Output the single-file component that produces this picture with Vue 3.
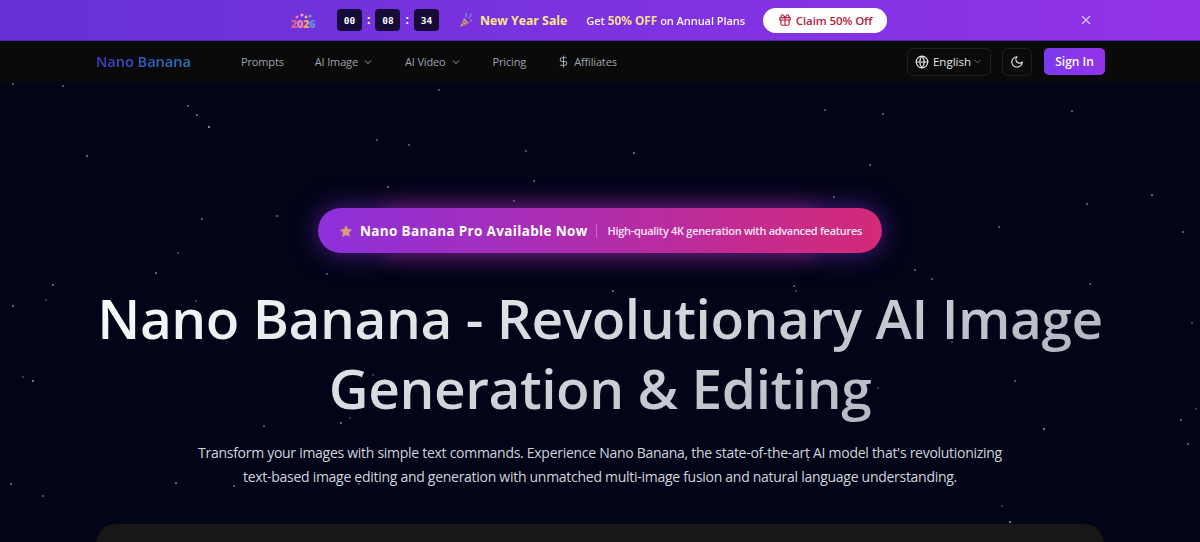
<template>
  <div class="page">
    <div class="promo">
      <div class="promo-inner">
        <div class="year">
          <svg width="24" height="10" viewBox="0 0 24 10">
            <circle cx="6" cy="6" r="1.6" fill="#e879a8" />
            <circle cx="11" cy="4" r="1.6" fill="#f0a0b8" />
            <circle cx="15" cy="6" r="1.4" fill="#f4b860" />
            <circle cx="19" cy="5" r="1.6" fill="#5aa0e8" />
          </svg>
          <span class="year-num"><i class="c1">2</i><i class="c2">0</i><i class="c3">2</i><i class="c4">6</i></span>
        </div>
        <div class="timer">
          <span class="digit">00</span><b>:</b><span class="digit">08</span><b>:</b><span class="digit">34</span>
        </div>
        <svg class="party" width="14" height="16" viewBox="0 0 14 16">
          <path d="M1 15 L5 6 L10 11 Z" fill="#d0a070" />
          <path d="M3 11 L7 14 M4 8.5 L9 12" stroke="#a85a90" stroke-width="1.2" />
          <path d="M7 5 Q8 2 6.5 1 M10 6 Q12 4 12 1.5" stroke="#6f8fe0" stroke-width="1.3" fill="none" />
          <circle cx="12" cy="8.5" r="1" fill="#d8709a" />
        </svg>
        <span class="sale">New Year Sale</span>
        <span class="offer">Get <strong>50% OFF</strong> on Annual Plans</span>
        <button class="claim">
          <svg width="14" height="14" viewBox="0 0 24 24" fill="none" stroke="currentColor" stroke-width="2" stroke-linecap="round" stroke-linejoin="round">
            <rect x="3" y="8" width="18" height="4" rx="1" />
            <path d="M12 8v13M19 12v7a2 2 0 0 1-2 2H7a2 2 0 0 1-2-2v-7" />
            <path d="M7.5 8a2.5 2.5 0 0 1 0-5C9.5 3 12 8 12 8s2.500-5 4.500-5a2.500 2.500 0 0 1 0 5" />
          </svg>
          Claim 50% Off
        </button>
      </div>
      <svg class="close" width="12" height="12" viewBox="0 0 12 12" fill="none" stroke="#d8c8f4" stroke-width="1.2">
        <path d="M2 2l8 8M10 2l-8 8" />
      </svg>
    </div>

    <nav class="nav">
      <div class="nav-inner">
        <span class="logo">Nano Banana</span>
        <div class="links">
          <a>Prompts</a>
          <a>AI Image
            <svg class="chev" width="12" height="12" viewBox="0 0 24 24" fill="none" stroke="currentColor" stroke-width="2"><path d="M6 9l6 6 6-6" /></svg>
          </a>
          <a>AI Video
            <svg class="chev" width="12" height="12" viewBox="0 0 24 24" fill="none" stroke="currentColor" stroke-width="2"><path d="M6 9l6 6 6-6" /></svg>
          </a>
          <a>Pricing</a>
          <a>
            <svg width="13" height="13" viewBox="0 0 24 24" fill="none" stroke="currentColor" stroke-width="2" stroke-linecap="round"><path d="M12 2v20M17 5H9.500a3.500 3.500 0 0 0 0 7h5a3.500 3.500 0 0 1 0 7H6" /></svg>
            Affiliates
          </a>
        </div>
        <div class="actions">
          <button class="lang">
            <svg width="14" height="14" viewBox="0 0 24 24" fill="none" stroke="currentColor" stroke-width="2"><circle cx="12" cy="12" r="10" /><path d="M2 12h20M12 2a15 15 0 0 1 0 20M12 2a15 15 0 0 0 0 20" /></svg>
            English
            <svg class="chev-dim" width="11" height="11" viewBox="0 0 24 24" fill="none" stroke="currentColor" stroke-width="2"><path d="M6 9l6 6 6-6" /></svg>
          </button>
          <button class="theme">
            <svg width="14" height="14" viewBox="0 0 24 24" fill="none" stroke="currentColor" stroke-width="2" stroke-linecap="round" stroke-linejoin="round"><path d="M12 3a6 6 0 0 0 9 9 9 9 0 1 1-9-9Z" /></svg>
          </button>
          <button class="signin">Sign In</button>
        </div>
      </div>
    </nav>

    <main class="hero">
      <i
        v-for="(s, i) in stars"
        :key="i"
        class="star"
        :style="{ left: s[0] + 'px', top: s[1] - 82 + 'px', opacity: s[2] }"
      ></i>
      <div class="badge">
        <svg width="14" height="14" viewBox="0 0 24 24" fill="#d69a78"><path d="M12 1.500l3.200 6.900 7.500.9-5.500 5.200 1.400 7.500L12 18.800l-6.600 3.700 1.400-7.500L1.300 9.300l7.500-.9z" /></svg>
        <span class="badge-title">Nano Banana Pro Available Now</span>
        <span class="badge-sep"></span>
        <span class="badge-sub">High-quality 4K generation with advanced features</span>
      </div>
      <h1 class="title">Nano Banana - Revolutionary AI Image Generation &amp; Editing</h1>
      <p class="lead">
        Transform your images with simple text commands. Experience Nano Banana, the state-of-the-art AI model that's revolutionizing<br />
        text-based image editing and generation with unmatched multi-image fusion and natural language understanding.
      </p>
      <div class="panel"></div>
    </main>
  </div>
</template>

<script setup>
// x, y, opacity of each star, read off the page
const stars = [
  [12, 83, 0.4], [62, 85, 0.45], [187, 105, 0.45], [196, 114, 0.5], [208, 126, 0.7], [376, 139, 0.4],
  [86, 155, 0.5], [387, 186, 0.45], [201, 218, 0.45], [276, 215, 0.45], [177, 252, 0.3], [155, 272, 0.5],
  [52, 284, 0.5], [45, 299, 0.3], [12, 305, 0.5], [195, 300, 0.3], [326, 273, 0.4], [438, 89, 0.4],
  [408, 144, 0.4], [525, 150, 0.4], [633, 152, 0.5], [533, 180, 0.45], [513, 200, 0.4], [612, 290, 0.5],
  [793, 285, 0.4], [795, 290, 0.3], [824, 109, 0.4], [882, 113, 0.45], [1071, 110, 0.45], [869, 164, 0.45],
  [1151, 194, 0.5], [1086, 203, 0.45], [833, 196, 0.45], [998, 226, 0.4], [1182, 231, 0.45], [914, 269, 0.45],
  [931, 278, 0.4], [1089, 283, 0.4], [22, 376, 0.3], [32, 380, 0.6], [372, 374, 0.3], [340, 422, 0.5],
  [349, 417, 0.25], [263, 425, 0.45], [10, 483, 0.5], [42, 495, 0.4], [175, 482, 0.5], [233, 485, 0.45],
  [358, 483, 0.4], [1191, 322, 0.3], [951, 341, 0.3], [1014, 380, 0.4], [877, 387, 0.3], [1195, 408, 0.25],
  [1180, 419, 0.45], [1043, 428, 0.6], [1187, 443, 0.45], [807, 459, 0.4], [889, 481, 0.4], [1001, 505, 0.3],
  [1009, 521, 0.6],
];
</script>

<style>
html,
body {
  background: #020417;
}
</style>

<style scoped>
.page {
  width: 1200px;
  height: 542px;
  overflow: hidden;
  font-family: "Open Sans", "Noto Sans", sans-serif;
  color: #fff;
}

.promo {
  position: relative;
  height: 40px;
  display: flex;
  align-items: center;
  justify-content: center;
  background: linear-gradient(90deg, #6531d6, #9333ea);
  border-bottom: 1px solid #4a2a96;
}

.promo-inner {
  display: flex;
  align-items: center;
  margin-right: 22px;
}

.year {
  width: 24px;
  display: flex;
  flex-direction: column;
  align-items: center;
  margin-right: 22px;
}

.year svg {
  margin-bottom: -3px;
}

.year-num {
  font-size: 11px;
  font-weight: 800;
  line-height: 11px;
  letter-spacing: -0.3px;
}

.year-num i {
  font-style: normal;
}

.c1 { color: #e8608a; }
.c2 { color: #e88aa8; }
.c3 { color: #eea860; }
.c4 { color: #5a90e0; }

.timer {
  display: flex;
  align-items: center;
  gap: 5px;
  margin-right: 20px;
}

.timer b {
  width: 3.5px;
  text-align: center;
  font-size: 12px;
  line-height: 20px;
  color: #fff;
}

.digit {
  width: 25px;
  height: 22px;
  display: flex;
  align-items: center;
  justify-content: center;
  border-radius: 4px;
  background: #170b38;
  font-family: "DejaVu Sans Mono", "Liberation Mono", monospace;
  font-size: 9.500px;
  font-weight: 700;
}

.party {
  margin-right: 7px;
}

.sale {
  font-size: 12.300px;
  font-weight: 700;
  color: #fde68a;
  margin-right: 19px;
  white-space: nowrap;
}

.offer {
  font-size: 11.100px;
  font-weight: 600;
  color: #fff;
  opacity: 0.95;
  margin-right: 18px;
  white-space: nowrap;
  letter-spacing: -0.1px;
}

.offer strong {
  font-size: 12px;
  font-weight: 700;
  color: #fde68a;
}

.claim {
  width: 124px;
  height: 25px;
  display: flex;
  align-items: center;
  justify-content: center;
  gap: 4px;
  border: 0;
  border-radius: 13px;
  background: #fff;
  color: #b91c3c;
  font-family: inherit;
  font-size: 11.500px;
  font-weight: 600;
  letter-spacing: -0.1px;
}

.close {
  position: absolute;
  right: 108px;
  top: 14px;
}

.nav {
  height: 41px;
  background: #0a0a0a;
}

.nav-inner {
  width: 1009px;
  height: 100%;
  margin-left: 96px;
  display: flex;
  align-items: center;
}

.logo {
  width: 145px;
  font-size: 14.500px;
  font-weight: 600;
  background: linear-gradient(90deg, #4338ca, #0ea5c0);
  -webkit-background-clip: text;
  background-clip: text;
  color: transparent;
  white-space: nowrap;
}

.links {
  display: flex;
  align-items: center;
  gap: 31px;
  font-size: 11px;
  letter-spacing: -0.15px;
  color: #9ca3af;
}

.links a {
  display: flex;
  align-items: center;
  gap: 4px;
  white-space: nowrap;
}

.actions {
  margin-left: auto;
  display: flex;
  align-items: center;
}

.lang,
.theme {
  height: 28px;
  display: flex;
  align-items: center;
  justify-content: center;
  border: 1px solid #1f1f1f;
  border-radius: 6px;
  background: #0a0a0a;
  color: #e5e7eb;
  font-family: inherit;
}

.lang {
  width: 84px;
  gap: 4px;
  padding: 0;
  font-size: 11.500px;
  margin-right: 11px;
}

.chev-dim {
  color: #777;
  margin-left: -3px;
}

.theme {
  width: 30px;
  padding: 0;
  margin-right: 12px;
}

.signin {
  width: 61px;
  height: 27px;
  border: 0;
  border-radius: 5px;
  background: linear-gradient(90deg, #7c3aed, #9333ea);
  color: #fff;
  font-family: inherit;
  font-size: 12px;
  font-weight: 600;
  padding: 0;
}

.hero {
  position: relative;
  isolation: isolate;
  height: 460px;
  background: #020417;
  display: flex;
  flex-direction: column;
  align-items: center;
  padding-top: 126px;
  box-sizing: border-box;
}

.star {
  position: absolute;
  width: 2px;
  height: 2px;
  border-radius: 50%;
  background: #fff;
}

.badge {
  position: relative;
  flex-shrink: 0;
  width: 564px;
  height: 45px;
  box-sizing: border-box;
  padding-left: 21px;
  display: flex;
  align-items: center;
  border-radius: 23px;
  background: linear-gradient(90deg, #8e30dc, #d42a78);
  box-shadow: 0 0 26px rgba(147, 51, 234, 0.55);
  white-space: nowrap;
}

.badge::before {
  content: "";
  position: absolute;
  left: 12%;
  right: 12%;
  top: -6px;
  bottom: -6px;
  z-index: -1;
  background: rgba(219, 39, 119, 0.26);
  filter: blur(10px);
}

.badge-title {
  margin-left: 7px;
  font-size: 13.500px;
  font-weight: 700;
  letter-spacing: 0.34px;
}

.badge-sep {
  width: 1px;
  height: 14px;
  margin: 0 11px 0 8px;
  background: rgba(255, 255, 255, 0.3);
}

.badge-sub {
  font-size: 11px;
  font-weight: 600;
  color: #f6e6f4;
  letter-spacing: -0.3px;
}

.title {
  position: relative;
  flex-shrink: 0;
  width: 1040px;
  margin: 30px 0 0;
  font-size: 55px;
  font-weight: 600;
  letter-spacing: -0.45px;
  line-height: 70px;
  text-align: center;
  background: linear-gradient(160deg, #fff, #a5a9b5);
  -webkit-background-clip: text;
  background-clip: text;
  color: transparent;
}

.lead {
  position: relative;
  flex-shrink: 0;
  width: 900px;
  margin: 18px 0 0;
  font-size: 14px;
  letter-spacing: -0.28px;
  line-height: 24px;
  text-align: center;
  color: #d1d5db;
}

.panel {
  position: relative;
  flex-shrink: 0;
  width: 1008px;
  height: 100px;
  margin-top: 35px;
  border-radius: 20px;
  background: #171717;
}
</style>
